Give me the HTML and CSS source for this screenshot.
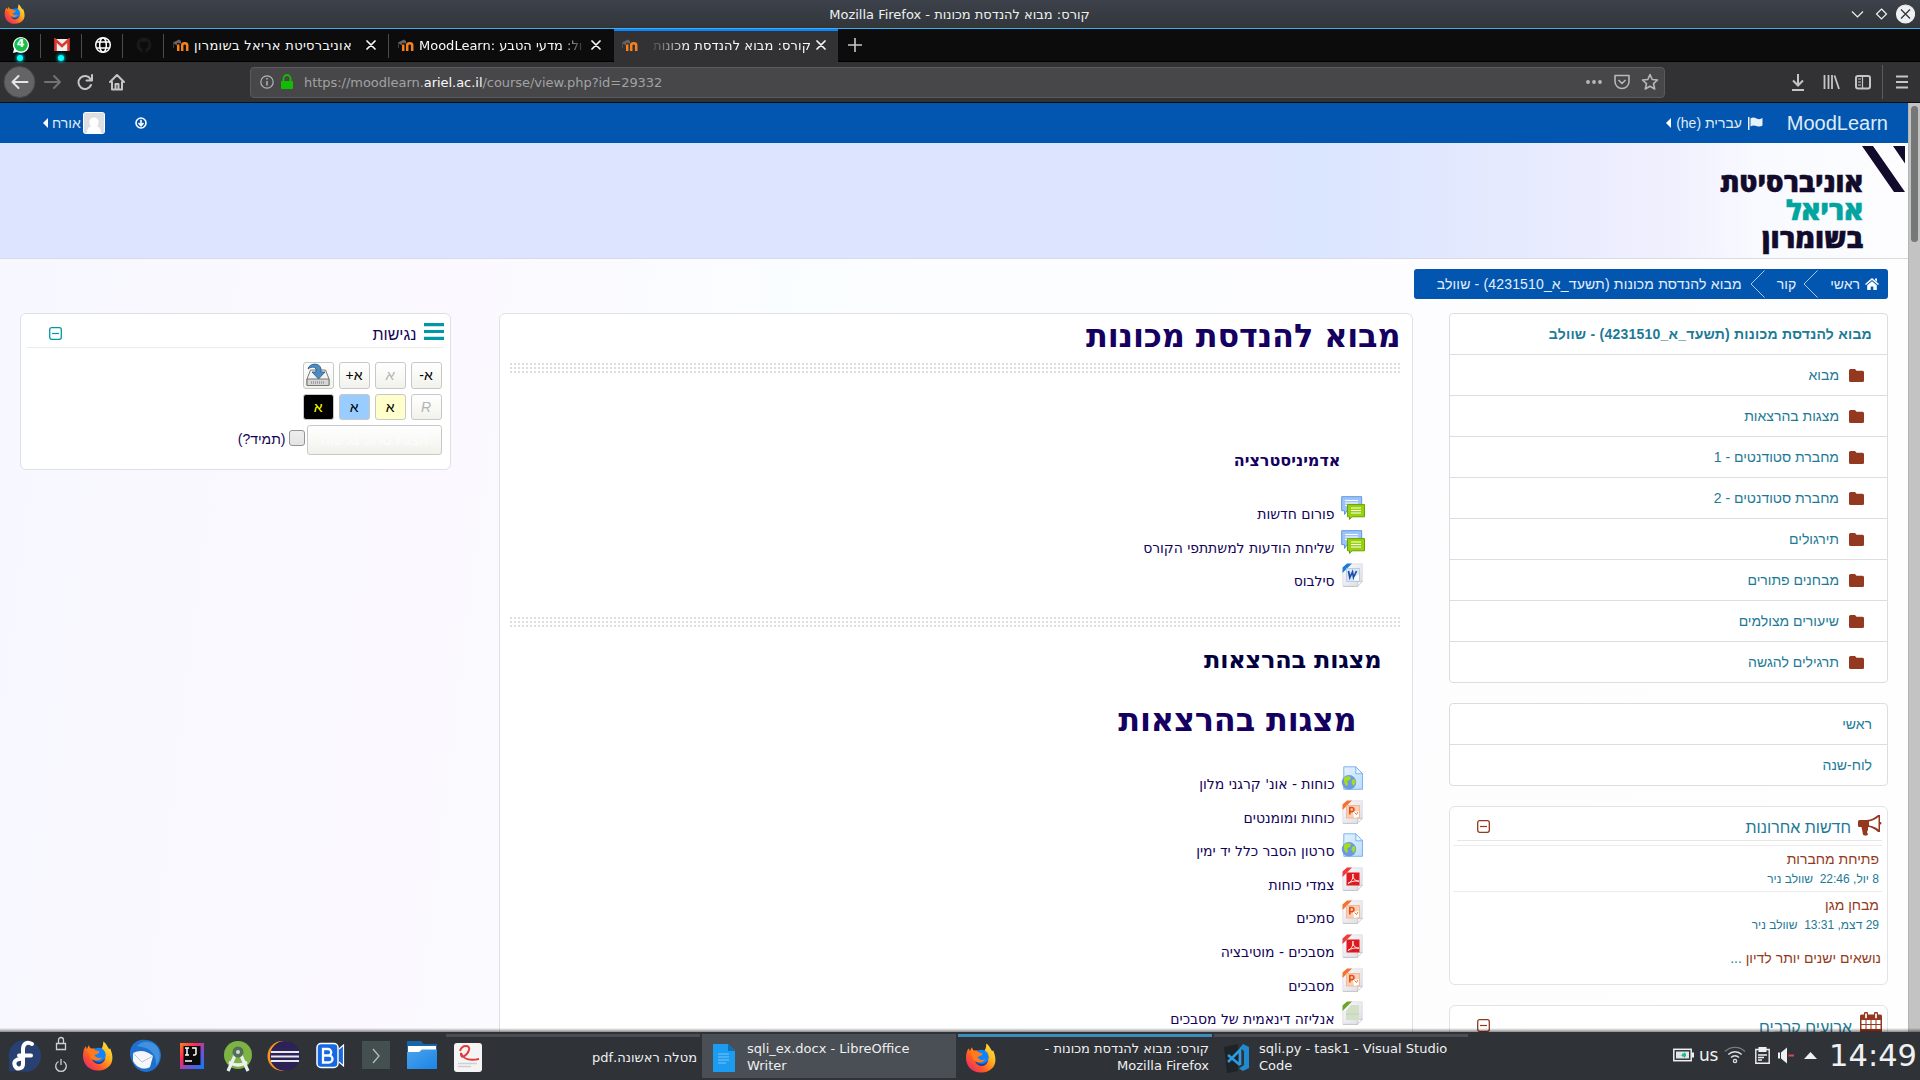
FILE: index.html
```
<!DOCTYPE html>
<html lang="he">
<head>
<meta charset="utf-8">
<title>קורס: מבוא להנדסת מכונות</title>
<link rel="stylesheet" href="styles.css">
</head>
<body>
<svg class="defs" aria-hidden="true">
  <defs>
    <linearGradient id="gFox" x1="1" y1="0" x2="0" y2="1"><stop offset="0" stop-color="#fff44f"/><stop offset=".35" stop-color="#ffb21f"/><stop offset=".65" stop-color="#ff5a26"/><stop offset="1" stop-color="#e31587"/></linearGradient>
    <linearGradient id="gBlueDoc" x1="0" y1="0" x2="1" y2="1"><stop offset="0" stop-color="#e4f3ff"/><stop offset="1" stop-color="#b9dcfb"/></linearGradient>
    <linearGradient id="gPaper" x1="0" y1="0" x2="1" y2="1"><stop offset="0" stop-color="#fbfbfd"/><stop offset="1" stop-color="#dcdce6"/></linearGradient>
    <linearGradient id="gFolder" x1="0" y1="0" x2="1" y2="1"><stop offset="0" stop-color="#4aa3ee"/><stop offset="1" stop-color="#1b84e4"/></linearGradient>
    <linearGradient id="gIJ" x1="0" y1="0" x2="1" y2="1"><stop offset="0" stop-color="#fc801d"/><stop offset=".35" stop-color="#fe2857"/><stop offset=".6" stop-color="#7a4fd0"/><stop offset="1" stop-color="#087cfa"/></linearGradient>
  </defs>
  <symbol id="firefox" viewBox="0 0 32 32">
    <path fill="url(#gFox)" d="M16 31C7 31 1 24 1 16 1 12 2 8 4 6l1 3 2-4 2 4c2-1 4-1 6 0l4 1c2-2 3-5 3-9 3 2 4 5 6 8l1-1c3 7 3 12 1 16-3 5-8 7-14 7z"/>
    <circle cx="17" cy="15" r="7.500" fill="#0a84ff"/><path fill="#20409a" d="M10 17c2 6 10 7 14 1-1 8-13 9-14-1z"/>
    <path fill="#ff7a1c" d="M5 9c3-2 7-1 9 1l4 1c0 3-4 3-5 4 1 3 5 4 8 2-2 5-11 5-13-1C7 13 6 11 5 9z"/>
  </symbol>
  <symbol id="moodle" viewBox="0 0 16 12"><path fill="none" stroke="#f5821f" stroke-width="2.500" d="M5.200 12V5.500M9.200 12V6.300c0-2.600 5-2.600 5 0V12"/><path fill="#6b625c" d="M0 3.500l6-3L8 2v2.500L4 4v2L2.200 5.500 1 4.500V9H.4V4z"/></symbol>
  <symbol id="close" viewBox="0 0 10 10"><path d="M1 1l8 8M9 1l-8 8" stroke="currentColor" stroke-width="1.700" stroke-linecap="round"/></symbol>
  <symbol id="folder" viewBox="0 0 15 13"><path fill="#943920" d="M1.500 0H6l1.500 1.800h6A1.500 1.500 0 0 1 15 3.300v8A1.500 1.500 0 0 1 13.500 13h-12A1.500 1.500 0 0 1 0 11.500v-10A1.500 1.500 0 0 1 1.500 0z"/></symbol>
  <symbol id="minus" viewBox="0 0 13 13"><rect x=".7" y=".7" width="11.600" height="11.600" rx="2" fill="none" stroke="currentColor" stroke-width="1.300"/><path d="M3 6.500h7" stroke="currentColor" stroke-width="1.200"/></symbol>
  <symbol id="forum" viewBox="0 0 24 24"><path d="M.7.700h20v14H6L3.500 18.500V14.700H.7z" fill="#9cc4fb" stroke="#5f97dc"/><path d="M4 4.500h13M4 7h13M4 9.500h5" stroke="#fff"/><path d="M6.500 8.600h17v12.200H11l-2.500 2.700v-2.700h-2z" fill="#99d208" stroke="#6ca00c"/><path d="M10 12h10M10 14.500h10M10 17h10" stroke="#fff"/></symbol>
  <symbol id="paper" viewBox="0 0 24 24"><path d="M9 .8h12.300v17.500l-4.500 4.500H1.800V8z" fill="url(#gPaper)" stroke="#d3d3db" stroke-width=".6"/><path d="M16.800 22.800v-4l4.500-.5z" fill="#fff" stroke="#aaa" stroke-width=".5"/><path d="M2 23.500h15" stroke="#bbb" stroke-width=".8"/></symbol>
  <symbol id="word" viewBox="0 0 24 24"><use href="#paper"/><path d="M1.500 4.500L6 .5h5L1.500 10z" fill="#1c7bd6"/><rect x="5.500" y="5.500" width="13" height="13" fill="#dbe7f6" stroke="#9dbbe0" stroke-width=".6"/><path d="M7.500 8l1.300 6.500L11.500 9l1 5.500L15.500 8" fill="none" stroke="#1b4fa5" stroke-width="1.700"/><path d="M13.500 14l4.500-3v6.500h-5z" fill="#fff"/></symbol>
  <symbol id="ppt" viewBox="0 0 24 24"><use href="#paper"/><path d="M1.500 4.500L6 .5h5L1.500 10z" fill="#ef7333"/><rect x="5.500" y="5.500" width="13" height="12.500" fill="#fbcfb4" stroke="#f2a070" stroke-width=".6"/><path d="M8.800 14.500V7.500h2a2 2 0 0 1 0 4.200h-2" fill="none" stroke="#e2501c" stroke-width="1.700"/><path d="M12 12l6-1v6l-5 1z" fill="#fff"/><path d="M13.500 12.500l2 2 1.500-2.500" fill="none" stroke="#f0703a"/></symbol>
  <symbol id="pdf" viewBox="0 0 24 24"><use href="#paper"/><path d="M1.500 4.500L6 .5h5L1.500 10z" fill="#ee3b3b"/><rect x="5.500" y="5.500" width="13" height="13" fill="#e0191c"/><path d="M7 16.500c4-2 5.500-6 5-9.500-1 4 2 7 6 7.200-4-.8-8 .3-11 2.300z" fill="none" stroke="#fff" stroke-width=".9"/></symbol>
  <symbol id="greenDoc" viewBox="0 0 24 24"><use href="#paper"/><path d="M1.500 4.500L6 .5h5L1.500 10z" fill="#6ba52a"/><path d="M5 10l5-6h8v15H5z" fill="#d3e0c8"/><path d="M5 13h13" stroke="#c2d1b6"/></symbol>
  <symbol id="url" viewBox="0 0 24 24"><path d="M2.800.8h12l6.700 7v15.500H2.800z" fill="url(#gBlueDoc)" stroke="#7fb2f0"/><path d="M14.800.8v7h6.700z" fill="#e9f6ff" stroke="#7fb2f0"/><circle cx="8" cy="16.300" r="7.200" fill="#6c9ae2"/><path d="M3 12c2-2 5-2 7-1l-1 3-3 1 1 3-1 2c-3-2-3-4-3-8zM11 14l3-1 .500 4-2 3-2-3z" fill="#a6dd1c"/></symbol>
</svg>

<header class="titlebar">
  <svg class="titlebar-icon" width="21" height="22"><use href="#firefox"/></svg>
  <div class="titlebar-text" dir="rtl">קורס: מבוא להנדסת מכונות - Mozilla Firefox</div>
  <svg class="titlebar-buttons" width="64" height="20" viewBox="0 0 64 20" fill="none" stroke="#eff0f1" stroke-width="1.200"><path d="M1 7.500l5.500 5.500L12 7.500M30.500 5l5 5-5 5-5-5z"/><circle cx="54.500" cy="10" r="9" fill="#eff0f1"/><path d="M50 5.500l9 9M59 5.500l-9 9" stroke="#31363b" stroke-width="1.300"/></svg>
</header>

<nav class="tabs">
  <div class="pin"><svg width="18" height="18" viewBox="0 0 18 18"><path d="M1 17l1-4a8 8 0 1 1 3 3z" fill="#fff"/><circle cx="9" cy="8.800" r="6.800" fill="#12c04a"/></svg><b class="pin-badge">4</b><i class="pin-dot"></i></div>
  <div class="pin"><svg width="16" height="14" viewBox="0 0 16 14"><path fill="#f1eeee" d="M1 1h14v12H1z"/><path d="M1.500 13V2L8 8l6.500-6v11" fill="none" stroke="#dc3a2e" stroke-width="2.600"/></svg><i class="pin-dot"></i></div>
  <div class="pin"><svg width="18" height="18" viewBox="0 0 18 18" fill="none" stroke="#fff" stroke-width="1.500"><circle cx="9" cy="9" r="7.300"/><ellipse cx="9" cy="9" rx="3.300" ry="7.300"/><path d="M2.500 6h13M2.500 12h13"/></svg></div>
  <div class="pin"><svg width="16" height="16" viewBox="0 0 16 16"><circle cx="8" cy="8" r="7.500" fill="#17191b"/><path d="M4 4l2 1h4l2-1v5c0 2-2 2-2.500 2.500V15h-3v-3.500C6 11 4 11 4 9z" fill="#0c0c0d"/></svg></div>
  <div class="tab tab-one"><svg width="16" height="12"><use href="#moodle"/></svg><span class="tab-label" dir="rtl">אוניברסיטת אריאל בשומרון</span><svg class="tab-close" width="10" height="10"><use href="#close"/></svg></div>
  <div class="tab tab-two"><svg width="16" height="12"><use href="#moodle"/></svg><span class="tab-label fade-end" dir="ltr">MoodLearn: ול: מדעי הטבע</span><svg class="tab-close" width="10" height="10"><use href="#close"/></svg></div>
  <div class="tab tab-active"><svg width="16" height="12"><use href="#moodle"/></svg><span class="tab-label fade-start" dir="rtl">קורס: מבוא להנדסת מכונות</span><svg class="tab-close" width="10" height="10"><use href="#close"/></svg></div>
  <svg class="tab-new" width="14" height="14" viewBox="0 0 14 14"><path d="M7 0v14M0 7h14" stroke="#c9c9ca" stroke-width="1.600"/></svg>
</nav>

<div class="toolbar">
  <svg class="nav-buttons" width="130" height="36" viewBox="0 0 130 36" fill="none" stroke="#c5c5c6" stroke-width="2" stroke-linecap="round" stroke-linejoin="round">
    <circle cx="19.500" cy="18" r="15.500" fill="#646466" stroke="#49494b" stroke-width="1"/><path d="M12.500 18h15M18.500 12l-6 6 6 6" stroke="#e6e6e7"/>
    <path d="M45 18h15M54 12l6 6-6 6" stroke="#727274"/>
    <path d="M90.500 15a6.500 6.500 0 1 0 .5 6M92 11v5.500h-5.500" /><path d="M110 18l7-7 7 7M112 18v7.500h10V18" /><path d="M115.500 25v-5h3v5"/>
  </svg>
  <div class="urlbar">
    <svg width="34" height="16" viewBox="0 0 34 16"><circle cx="7" cy="8" r="6.200" fill="none" stroke="#b4b4b5" stroke-width="1.200"/><path d="M7 7v4.500M7 4v1.500" stroke="#b4b4b5" stroke-width="1.500"/><rect x="21" y="7" width="12" height="8" rx="1" fill="#12bc00"/><path d="M23.500 7V4.500a3.500 3.500 0 0 1 7 0V7" fill="none" stroke="#12bc00" stroke-width="1.800"/></svg>
    <div class="url">https://moodlearn.<b>ariel.ac.il</b>/course/view.php?id=29332</div>
    <svg width="74" height="18" viewBox="0 0 74 18" fill="none" stroke="#b8b8b9" stroke-width="1.600" stroke-linejoin="round"><g fill="#b8b8b9" stroke="none"><circle cx="3" cy="9" r="1.900"/><circle cx="9" cy="9" r="1.900"/><circle cx="15" cy="9" r="1.900"/></g><path d="M30 2.500h14v6a7 7 0 0 1-14 0zM33.500 7l3.500 3.500L40.500 7"/><path d="M65 1.500l2.200 5 5.300.500-4 3.600 1.200 5.400-4.700-2.800-4.700 2.800 1.200-5.400-4-3.600 5.300-.5z"/></svg>
  </div>
  <svg class="tool-icons" width="118" height="34" viewBox="0 0 118 34" fill="none" stroke="#c5c5c6" stroke-width="2"><path d="M8 9v11M3 15.500l5 5 5-5M2 25h12"/><path d="M34.500 10v14M38.500 10v14M42 10v14M44.500 10.500l4.500 13.500" stroke-width="1.800"/><rect x="66" y="11" width="14" height="12.500" rx="2"/><path d="M72.500 11v12.500M68 14h3M68 17h3M68 20h3" stroke-width="1.200"/><path d="M92.500 0v34" stroke="#5b5b5d" stroke-width="1"/><path d="M106 11.500h12M106 17h12M106 22.500h12"/></svg>
</div>

<div class="viewport">
<div class="page" dir="rtl">
  <div class="navbar">
    <span class="brand">MoodLearn</span>
    <svg width="15" height="13" viewBox="0 0 15 13" fill="#e8f0fa"><path d="M0 0h1.500v13H0zM2.500 1.500c2-1.500 4-1 6 0s4 .8 6-.5v7.500c-2 1.500-4 1.300-6 .5s-4-1-6 .5z"/></svg>
    <span class="lang">עברית (he)</span>
    <i class="caret"></i>
    <span class="spacer"></span>
    <svg class="down-circle" width="12" height="12" viewBox="0 0 12 12" fill="none" stroke="#fff" stroke-width="1.600"><circle cx="6" cy="6" r="5"/><path d="M6 2.800v5.500M3.500 6L6 8.700 8.500 6"/></svg>
    <svg width="22" height="22" viewBox="0 0 22 22"><rect width="22" height="22" rx="3" fill="#fff"/><rect x="1" y="1" width="20" height="20" rx="1" fill="#dfdfe3"/><path d="M4 22c0-6 2-7 4-7.500-2-2-3-9 3-9s5 7 3 9c2 .5 4 1.500 4 7.500z" fill="#fff"/></svg>
    <span class="user">אורח</span>
    <i class="caret"></i>
  </div>
  <div class="banner">
    <svg class="logo" width="190" height="114" viewBox="0 0 190 114" direction="rtl">
      <path d="M144 3h11l32 46h-11zM175 3h12v17.500z" fill="#120b2c"/>
      <g class="logo-text"><text x="145" y="49" textLength="143" lengthAdjust="spacingAndGlyphs">אוניברסיטת</text><text x="145" y="77" textLength="77" lengthAdjust="spacingAndGlyphs" class="teal">אריאל</text><text x="145" y="104.500" textLength="101" lengthAdjust="spacingAndGlyphs">בשומרון</text></g>
    </svg>
  </div>
  <div class="breadcrumb">
    <svg width="14" height="12" viewBox="0 0 14 12" fill="#fff"><path d="M7 0l7 6-1 1.100L7 2 1 7.100 0 6zM10 .5h2v3.300l-2-1.700zM2.200 7.200L7 3.200l4.800 4V12H8.300V8.500H5.700V12H2.200z"/></svg>
    <span class="bc-home">ראשי</span>
    <svg width="15" height="28" viewBox="0 0 15 28"><path d="M14.500.5L1 14l13.500 13.500" fill="none" stroke="#a9c6e6"/></svg>
    <span class="bc-kor">קור</span>
    <svg width="15" height="28" viewBox="0 0 15 28"><path d="M14.500.5L1 14l13.500 13.500" fill="none" stroke="#a9c6e6"/></svg>
    <span class="bc-course">מבוא להנדסת מכונות (תשעד_א_4231510) - שוולב</span>
  </div>
  <div class="columns">
    <aside class="side-right">
      <ul class="menu">
        <li class="menu-title">מבוא להנדסת מכונות (תשעד_א_4231510) - שוולב</li>
        <li class="sub"><svg width="15" height="13"><use href="#folder"/></svg>מבוא</li>
        <li class="sub"><svg width="15" height="13"><use href="#folder"/></svg>מצגות בהרצאות</li>
        <li class="sub"><svg width="15" height="13"><use href="#folder"/></svg>מחברת סטודנטים - 1</li>
        <li class="sub"><svg width="15" height="13"><use href="#folder"/></svg>מחברת סטודנטים - 2</li>
        <li class="sub"><svg width="15" height="13"><use href="#folder"/></svg>תירגולים</li>
        <li class="sub"><svg width="15" height="13"><use href="#folder"/></svg>מבחנים פתורים</li>
        <li class="sub"><svg width="15" height="13"><use href="#folder"/></svg>שיעורים מצולמים</li>
        <li class="sub"><svg width="15" height="13"><use href="#folder"/></svg>תרגילים להגשה</li>
      </ul>
      <ul class="menu">
        <li>ראשי</li>
        <li>לוח-שנה</li>
      </ul>
      <section class="block news">
        <div class="block-head">
          <svg width="24" height="21" viewBox="0 0 24 21"><path fill="#943920" d="M0 6.500C0 5.500 1 5 2 5h7c4 0 8-2.500 11-5h2v7c2 0 2 2.500 0 2.500V17h-2c-3-3-7-5-10-5v3l-1 2 1 2.500c-1 1.500-4 1.500-5 0L3.500 12H2c-1.500 0-2-.5-2-1.500z"/><path fill="#fff" d="M11 6.500C15 6 18 4 20.500 2v12.500C18 12.500 15 11 11 10.500z"/></svg>
          <h2>חדשות אחרונות</h2><svg class="toggle" width="13" height="13"><use href="#minus"/></svg>
        </div>
        <div class="post"><a>פתיחת מחברות</a><small>8 יול, 22:46 &nbsp;שוולב ניר</small></div>
        <div class="post"><a>מבחן מגן</a><small>29 דצמ, 13:31 &nbsp;שוולב ניר</small></div>
        <div class="older"><a>נושאים ישנים יותר לדיון</a> ...</div>
      </section>
      <section class="block events">
        <div class="block-head">
          <svg width="22" height="22" viewBox="0 0 22 22"><rect y="2.500" width="22" height="19.500" rx="1.500" fill="#943920"/><path d="M1.500 8h4v4h-4zM6.500 8h4v4h-4zM11.500 8h4v4h-4zM16.500 8h4v4h-4zM1.500 13h4v4h-4zM6.500 13h4v4h-4zM11.500 13h4v4h-4zM16.500 13h4v4h-4z" fill="#fff"/><path d="M6 1.500v4M16 1.500v4" stroke="#943920" stroke-width="4" stroke-linecap="round"/><path d="M6 2v3.500M16 2v3.500" stroke="#fff" stroke-width="1.700" stroke-linecap="round"/></svg>
          <h2>ארועים קרבים</h2><svg class="toggle" width="13" height="13"><use href="#minus"/></svg>
        </div>
      </section>
    </aside>

    <main class="course">
      <h1>מבוא להנדסת מכונות</h1>
      <div class="dots"></div>
      <h4>אדמיניסטרציה</h4>
      <ul class="items">
        <li><svg width="24" height="24"><use href="#forum"/></svg><span>פורום חדשות</span></li>
        <li><svg width="24" height="24"><use href="#forum"/></svg><span>שליחת הודעות למשתתפי הקורס</span></li>
        <li><svg width="24" height="24"><use href="#word"/></svg><span>סילבוס</span></li>
      </ul>
      <div class="dots dots-two"></div>
      <h3>מצגות בהרצאות</h3>
      <h1 class="inner">מצגות בהרצאות</h1>
      <ul class="items">
        <li><svg width="24" height="24"><use href="#url"/></svg><span>כוחות - אונ' קרגני מלון</span></li>
        <li><svg width="24" height="24"><use href="#ppt"/></svg><span>כוחות ומומנטים</span></li>
        <li><svg width="24" height="24"><use href="#url"/></svg><span>סרטון הסבר כלל יד ימין</span></li>
        <li><svg width="24" height="24"><use href="#pdf"/></svg><span>צמדי כוחות</span></li>
        <li><svg width="24" height="24"><use href="#ppt"/></svg><span>סמכים</span></li>
        <li><svg width="24" height="24"><use href="#pdf"/></svg><span>מסבכים - מוטיבציה</span></li>
        <li><svg width="24" height="24"><use href="#ppt"/></svg><span>מסבכים</span></li>
        <li><svg width="24" height="24"><use href="#greenDoc"/></svg><span>אנליזה דינאמית של מסבכים</span></li>
      </ul>
    </main>

    <aside class="access">
      <div class="block-head">
        <svg width="20" height="17" viewBox="0 0 20 17"><path d="M0 1.700h20M0 8.500h20M0 15.300h20" stroke="#0097a7" stroke-width="3.200"/></svg>
        <h2>נגישות</h2><svg class="toggle" width="13" height="13"><use href="#minus"/></svg>
      </div>
      <div class="btns">
        <button><bdo dir="rtl">א-</bdo></button><button class="off">א</button><button><bdo dir="rtl">א+</bdo></button>
        <button><svg width="24" height="24" viewBox="0 0 24 24"><path d="M4.500 7h15l3.500 9v6H1v-6z" fill="#f4f4f4" stroke="#777"/><path d="M1 16h22v6.500H1z" fill="#d5d5d5" stroke="#777"/><path d="M5 19.500h14" stroke="#999" stroke-width="2.500" stroke-dasharray="1 1"/><path d="M2 6C3 0 14-1 15 6v3h4l-6.500 7L6 9h4V7C10 4 6 3 2 6z" fill="#4c8cc0" stroke="#24598a" stroke-width=".8"/></svg></button>
        <button class="off">R</button><button class="yellow">א</button><button class="blue">א</button><button class="black">א</button>
      </div>
      <div class="launch"><button>הצגת סרגל נגישות</button><i class="check"></i><span>(תמיד?)</span></div>
    </aside>
  </div>
</div>
<div class="scrollbar"><i></i></div>
</div>

<footer class="taskbar">
  <svg class="launchers" width="446" height="44" viewBox="0 0 446 44">
    <path d="M25 6a16 16 0 1 1-16 16v15h15a16 16 0 0 0 1-31z" fill="#294172"/><circle cx="24" cy="21.500" r="15.300" fill="#294172"/><path d="M32 10c-5-3-9 0-9 5v15c0 5-6 6-8 2s1-7 5-7M19 21.500h12" fill="none" stroke="#fff" stroke-width="4" stroke-linecap="round"/>
    <g fill="none" stroke="#cdd0d2" stroke-width="1.300"><path d="M56.500 9.500h9v6h-9zM58.500 9.500V6a2.500 2.500 0 0 1 5 0v3.500"/><path d="M58.500 27.500a5.300 5.300 0 1 0 5 0M61 25v6"/></g>
    <use href="#firefox" x="82" y="6" width="31" height="32"/>
    <path d="M131 25c-4-12 5-21 15-19 8 0 15 7 15 15 0 9-6 16-14 17-8 0-13-5-16-13z" fill="#1f6fd0"/><path d="M137 12c5-6 16-6 21 2 3 7 2 13-2 18 1-8-3-15-10-18z" fill="#3f92dd"/><path d="M133 19c6-3 13-3 20 3l-3 11c-7 4-14 0-17-6z" fill="#f4f6fa"/><path d="M133 19l9 9 11-6" fill="none" stroke="#b8c4d8"/>
    <rect x="180" y="9" width="24" height="26" fill="url(#gIJ)"/><rect x="183.500" y="12" width="17" height="19" fill="#0b0b0b"/><path d="M185 14h4M187 14v7M185 21h4M192 14h4v5.500q0 2-3 1.500M185 27h7" fill="none" stroke="#fff" stroke-width="1.500"/>
    <circle cx="238" cy="21" r="14" fill="#7cb342"/><path d="M237 17l-9 20M239 17l9 20M229 28q9 6 18 0" fill="none" stroke="#eceff1" stroke-width="3.200"/><circle cx="238" cy="18" r="5.500" fill="#546e5a"/><circle cx="238" cy="18" r="2" fill="#cfd8dc"/>
    <circle cx="282.500" cy="22" r="15" fill="#f7941e"/><circle cx="285" cy="22" r="15" fill="#2c2255"/><path d="M271 18h28M271 22.500h28M271 27h28" stroke="#e8e8f0" stroke-width="2.200"/>
    <rect x="317" y="9.500" width="21" height="24" rx="4" fill="#1668e3" stroke="#fff" stroke-width="1.500"/><path d="M323 15h5a3 3 0 0 1 0 6.500h-5zM323 21.500h6a3.300 3.300 0 0 1 0 7h-6zM323 15v13.500" fill="none" stroke="#fff" stroke-width="2.300"/><path d="M339 15l4.500-4v21l-4.500-4" fill="#1668e3" stroke="#fff" stroke-width="1.200"/>
    <rect x="362" y="7" width="28" height="29" fill="#44504f"/><path d="M373 15l6 7-6 7" fill="none" stroke="#b5bbbb" stroke-width="1.300"/><path d="M362 35.500h28" stroke="#2b3333"/>
    <path d="M407 7h14l2.500 3H437v12h-30z" fill="#1566a8"/><path d="M408 12h28v6h-28z" fill="#fff"/><path d="M407 18h12l3-2.500h15V35h-30z" fill="url(#gFolder)"/>
  </svg>
  <div class="task task-pdf"><svg width="28" height="29" viewBox="0 0 28 29"><rect width="28" height="29" rx="3" fill="#f4f4f4"/><path d="M6 8c2-7 11-6 9-1-2 6-9 10-8 3 2 6 9 8 18 6" fill="none" stroke="#e23b3b" stroke-width="2"/><path d="M4 20.500h19M4 23.500h13" stroke="#cfcfcf" stroke-width="1.500"/></svg><span dir="rtl">מטלה ראשונה.pdf</span></div>
  <div class="task task-doc"><svg width="22" height="28" viewBox="0 0 22 28"><path d="M0 0h15l7 7v21H0z" fill="#1c9cf0"/><path d="M15 0l7 7h-7z" fill="#0b6fb8"/><path d="M5 10h11M5 13h11M5 16h11M5 19h8" stroke="#7cc6f7" stroke-width="1.200"/></svg><span>sqli_ex.docx - LibreOffice<br>Writer</span></div>
  <div class="task task-fox"><svg width="31" height="32"><use href="#firefox"/></svg><span dir="rtl">קורס: מבוא להנדסת מכונות -<br>Mozilla Firefox</span></div>
  <div class="task task-code"><svg width="28" height="30" viewBox="0 0 28 30"><path d="M1 4L15 1v27L4 30z" fill="#1d2327"/><path d="M20 1l6 3v21l-6 3-4-2.500L21 22V8l-4-3z" fill="#1f8ad2"/><path d="M5 12l12 10M5 19l12-12v15" fill="none" stroke="#2b9ae0" stroke-width="2.600"/></svg><span>sqli.py - task1 - Visual Studio<br>Code</span></div>
  <div class="tray">
    <svg width="21" height="14" viewBox="0 0 21 14"><rect x=".8" y="1.300" width="17.400" height="11.400" fill="none" stroke="#eff0f1" stroke-width="1.500"/><path d="M19 4.500h2v5h-2z" fill="#eff0f1"/><path d="M3 3.500h13v7H3z" fill="#e4e6e7"/><path d="M6 7h3l3-3v6L9 7.500M9 5.500h4v3H9z" fill="#1abc9c"/></svg>
    <span class="kbd">us</span>
    <svg width="22" height="18" viewBox="0 0 22 18" fill="none" stroke="#dfe1e2" stroke-width="1.300"><circle cx="11" cy="15" r="1.600"/><path d="M7 11.500a5.500 5.500 0 0 1 8 0M4.300 8.500a9.500 9.500 0 0 1 13.400 0"/><path d="M1 5.500a14 14 0 0 1 20 0" stroke="#777c80"/></svg>
    <svg width="15" height="17" viewBox="0 0 15 17" fill="none" stroke="#eff0f1" stroke-width="1.400"><path d="M.8 2.500h13.400v13.700H.8z"/><path d="M3.500 0h8v5h-8z" fill="#eff0f1" stroke="none"/><path d="M3 8h9M3 10.500h6M3 13h4"/></svg>
    <svg width="17" height="17" viewBox="0 0 17 17"><path d="M0 5.500h2v6H0zM3 5.500L9 .5v16l-6-5z" fill="#eff0f1"/><path d="M10.500 8.500H16" stroke="#da4453" stroke-width="2"/></svg>
    <svg width="13" height="7" viewBox="0 0 13 7"><path d="M0 7L6.500 0 13 7z" fill="#eff0f1"/></svg>
    <span class="clock">14:49</span>
  </div>
</footer>
</body>
</html>
```
FILE: styles.css
```
* { box-sizing: border-box; }
html, body { height: 100%; }
body { margin: 0; display: flex; flex-direction: column; overflow: hidden; font: 13px "DejaVu Sans", sans-serif; color: #eff0f1; background: #0c0c0d; }
svg { flex: none; display: block; }
.defs { position: absolute; width: 0; height: 0; }
ul { list-style: none; margin: 0; padding: 0; }
h1, h2, h3, h4 { margin: 0; }

/* Window frame */
.titlebar { flex: none; height: 29px; display: flex; align-items: center; padding: 0 5px 0 4px; background: linear-gradient(#3d424b, #31363b); border-bottom: 1px solid #3daee9; }
.titlebar-icon { margin-right: 43px; }
.titlebar-text { flex: 1; text-align: center; }

.tabs { flex: none; height: 33px; display: flex; align-items: stretch; border-bottom: 1px solid #000; color: #f9f9fa; }
.pin { position: relative; width: 41px; display: flex; align-items: center; justify-content: center; }
.pin::after, .tab-one::after { content: ""; position: absolute; right: 0; top: 5px; bottom: 3px; width: 1px; background: #4d4d4e; }
.pin-badge { position: absolute; top: 8px; width: 100%; text-align: center; font-size: 11px; color: #fff; }
.pin-dot { position: absolute; left: 17px; bottom: 0; width: 6px; height: 6px; border-radius: 50%; background: #0ff; box-shadow: 0 0 3px 1px #0aa; }
.tab { position: relative; display: flex; align-items: center; padding: 0 13px 0 9px; gap: 5px; }
.tab-label { flex: 1; white-space: nowrap; overflow: hidden; }
.tab-one, .tab-two { width: 225px; }
.tab-one .tab-label { letter-spacing: .32px; direction: ltr; }
.tab-active { width: 224px; background: #323234; border-top: 2px solid #0a84ff; margin-bottom: -1px; padding: 0 12px 3px 8px; }
.tab-active .tab-label { margin-left: 5px; letter-spacing: .1px; }
.fade-end { -webkit-mask-image: linear-gradient(to left, transparent, #000 25px); mask-image: linear-gradient(to left, transparent, #000 25px); }
.fade-start { -webkit-mask-image: linear-gradient(to right, transparent, #000 40px); mask-image: linear-gradient(to right, transparent, #000 40px); }
.tab-new { align-self: center; margin-left: 10px; }

.toolbar { flex: none; height: 41px; display: flex; align-items: center; background: #323234; border-bottom: 1px solid #0c0c0d; }
.nav-buttons { margin-right: 120px; }
.urlbar { width: 1415px; height: 31px; display: flex; align-items: center; gap: 10px; padding: 0 5px 0 9px; background: #474749; border: 1px solid #5b5b5d; border-radius: 4px; }
.url { flex: 1; color: #a2a2a3; letter-spacing: -.04px; }
.url b { font-weight: 400; color: #f9f9fa; }
.tool-icons { margin-left: 125px; }

/* Course page */
.viewport { position: relative; flex: 1; min-height: 0; display: flex; overflow: hidden; }
.viewport::after { content: ""; position: absolute; left: 0; right: 0; bottom: 0; height: 4px; background: linear-gradient(transparent, rgba(0, 0, 0, .45)); }
.page { width: 1908px; overflow: hidden; font-family: "Liberation Sans", "DejaVu Sans", sans-serif; font-size: 14px; color: #140459; background: linear-gradient(97deg, #f7f7ff, #fbf9ff 24%, #fafdff 40%, #fdfdff 65%, #fefefe); }
.scrollbar { width: 12px; background: #c2c3c2; border-left: 1px solid #b3b5b4; padding: 3px 2px; }
.scrollbar i { display: block; height: 136px; width: 7px; border-radius: 4px; background: #767777; }

.navbar { height: 40px; display: flex; align-items: center; padding: 0 20px 0 43px; background: #0256b0; color: #dfebf8; }
.brand { font-size: 20px; width: 101px; margin-left: 24px; }
.lang { margin: 0 6px 0 5px; }
.caret { width: 0; height: 0; border: 5px solid transparent; border-right: 5px solid #fff; border-left: 0; }
.spacer { flex: 1; }
.down-circle { margin-left: 30px; }
.user { margin: 0 2px 0 4px; }

.banner { height: 116px; display: flex; border-bottom: 1px solid #dadbe0; background: linear-gradient(to right, #dde4ff 66%, #d9e5ff 68%, #e4e9fe 78%, #f1f0fe 88%, #f8faff 92%, #fdfdff); }
.logo-text { font: 800 27px "Open Sans", "DejaVu Sans", sans-serif; fill: #120b2c; stroke: #120b2c; stroke-width: .4; }
.logo-text .teal { fill: #00a59f; stroke: #00a59f; }

.breadcrumb { width: 474px; height: 30px; margin: 10px 20px 14px 0; display: flex; align-items: center; padding-right: 9px; border-radius: 3px; background: #0256b0; color: #e4eefa; white-space: nowrap; }
.bc-home { margin: 0 5px 0 12px; }
.bc-kor { margin: 0 7px 0 12px; }
.bc-course { margin-right: 8px; letter-spacing: .16px; }

.columns { display: flex; align-items: flex-start; padding: 0 20px; }
.side-right { width: 440px; margin-left: 36px; display: flex; flex-direction: column; gap: 20px; color: #1d7a96; }
.menu { background: #fff; border: 1px solid #dcddde; border-radius: 4px; }
.menu li { height: 41px; display: flex; align-items: center; padding: 0 15px; border-bottom: 1px solid #dcddde; }
.menu li:last-child { height: 40px; border-bottom: 0; }
.menu .sub { padding-right: 23px; gap: 10px; }
.menu .menu-title { font-weight: 700; letter-spacing: .23px; }

.block-head { display: flex; align-items: flex-start; }
.block-head h2 { font-size: 16px; font-weight: 400; line-height: 18px; }
.block { background: #fff; border: 1px solid #e2e3e6; border-radius: 6px; padding: 8px 5px 0 3px; }
.news { height: 179px; }
.news .block-head { height: 26px; margin-left: 4px; border-bottom: 1px solid #e6e6e6; margin-bottom: 4px; }
.block h2 { padding: 4px 7px 0 0; }
.block .toggle { color: #943920; margin: 5px auto 0 20px; }
.post { height: 46px; padding: 5px 3px 0 0; border-top: 1px solid #ececec; }
.post a { display: block; line-height: 16px; color: #943920; }
.post small { display: block; font-size: 12px; line-height: 14px; margin-top: 5px; }
.older { margin-top: 13px; padding-right: 1px; }
.older a { color: #943920; }
.events { height: 60px; padding-top: 6px; }
.events .toggle { margin: 7px auto 0 24px; }
.events h2 { padding: 7px 8px 0 0; }

.course { width: 915px; height: 760px; background: #fff; border: 1px solid #e0e1e4; border-radius: 6px; padding: 0 11px 0 10px; margin-left: 48px; font-family: "DejaVu Sans", sans-serif; color: #140459; }
h1 { font-size: 32px; line-height: 44px; height: 49px; letter-spacing: -.15px; color: #150062; }
.dots { height: 11px; background: conic-gradient(from 270deg at 2px 2px, #dedede 90deg, transparent 0) 0 0 / 4px 4px; }
h4 { font-size: 16px; line-height: 20px; padding: 77px 60px 0 0; height: 120px; color: #150062; }
.items li { height: 33.6px; display: flex; align-items: center; padding-right: 36px; gap: 6px; }
.items svg { margin-bottom: 5px; }
.items span { padding-top: 7px; letter-spacing: -.05px; }
.dots-two { margin-top: 22px; }
h3 { font-size: 24px; line-height: 30px; letter-spacing: -.2px; padding: 17px 19px 0 0; height: 68px; color: #00003f; }
.inner { padding: 4px 44px 0 0; height: 68px; line-height: 40px; }

.access { width: 431px; height: 157px; background: #fff; border: 1px solid #dfe0e3; border-radius: 6px; padding: 9px 6px 0; }
.access .block-head { height: 25px; border-bottom: 1px solid #ececec; }
.access h2 { padding: 3px 7px 0 0; }
.access .toggle { color: #0097a7; margin: 4px auto 0 22px; }
.btns { display: grid; grid-template-columns: repeat(4, 31px); gap: 5px; padding: 14px 2px 0; }
button { font: 14px "Liberation Sans", sans-serif; height: 26.500px; padding: 0; display: flex; align-items: center; justify-content: center; color: #000; border: 1px solid #c8c8c8; border-radius: 3px; background: linear-gradient(#fff, #f2f2ec); }
.off { color: #b3b3b3; font-style: italic; }
.yellow { background: #ffffcc; }
.blue { background: #99ccff; }
.black { background: #000; color: #ff0; }
.launch { display: flex; align-items: flex-start; padding: 5px 2px 0; }
.launch button { width: 135px; height: 30px; color: #fdfdfb; }
.check { width: 16px; height: 16px; margin: 5px 2px 0 3px; border: 1px solid #929590; border-radius: 3px; background: linear-gradient(#eee, #e4e4e4); }
.launch span { padding-top: 6px; }

/* Desktop panel */
.taskbar { flex: none; height: 48px; display: flex; background: #2f3338; line-height: 17px; white-space: nowrap; }
.launchers { margin-top: 2px; }
.task { display: flex; align-items: center; margin: 2px 2px 0 0; border-top: 3px solid #4a4e53; padding: 0 0 2px 11px; gap: 12px; }
.task span { flex: 1; padding-bottom: 1px; }
.task-pdf { width: 254px; padding: 0 3px 2px 8px; }
.task-doc { width: 254px; background: #4a4e55; border-top-color: #4a4e55; margin-bottom: 2px; padding-bottom: 0; }
.task-fox { width: 254px; border-top-color: #3a8dbd; padding: 0 3px 2px 7px; }
.task-code { width: 254px; gap: 8px; padding-left: 9px; }
.tray { margin-left: auto; width: 247px; display: flex; align-items: center; padding: 0 3px 2px 0; }
.kbd { font-size: 17px; margin: 0 5px; width: 20px; letter-spacing: -.2px; }
.tray svg + svg { margin-left: 8.500px; }
.clock { font-size: 30.500px; margin-left: auto; }
```
